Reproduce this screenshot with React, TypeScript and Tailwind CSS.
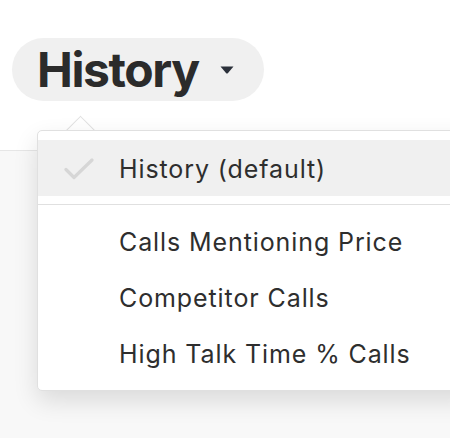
import React from 'react';

interface ViewOption {
  label: string;
  selected?: boolean;
}

const options: ViewOption[] = [
  { label: 'Calls Mentioning Price' },
  { label: 'Competitor Calls' },
  { label: 'High Talk Time % Calls' },
];

const CheckIcon = () => (
  <svg width="32" height="24" viewBox="0 0 32 24" fill="none">
    <path d="M3 11.5 L11 19.5 L29 2" stroke="#d6d6d6" strokeWidth="3.2" strokeLinecap="round" strokeLinejoin="round" />
  </svg>
);

const Caret = () => (
  <svg width="14" height="8" viewBox="0 0 14 8">
    <path d="M0.5 0.5 H13.5 L7.8 7.2 Q7 8 6.2 7.2 Z" fill="#2b303a" />
  </svg>
);

const MenuRow: React.FC<{ option: ViewOption }> = ({ option }) => (
  <div
    className={`flex h-[56px] items-center pl-[25px] pt-[3px] ${option.selected ? 'bg-[#f0f0f0]' : ''}`}
  >
    <div className="w-[56px] flex items-center">
      {option.selected && <CheckIcon />}
    </div>
    <span className="text-[25px] text-[#2e2e2e] tracking-[0.9px]">{option.label}</span>
  </div>
);

export default function App() {
  return (
    <div
      className="relative w-[450px] h-[438px] overflow-hidden bg-[#f8f8f8]"
      style={{ fontFamily: 'Inter, "Noto Sans", sans-serif' }}
    >
      {/* Header strip */}
      <div className="h-[151px] bg-white border-b border-[#e6e6e6] pt-[38px] pl-[12px]">
        <button className="flex h-[63px] items-center gap-[21px] rounded-full bg-[#f0f0f0] pl-[25px] pr-[30px]">
          <span className="text-[48px] font-bold text-[#2b2b2b] tracking-[-1.4px] leading-none">History</span>
          <Caret />
        </button>
      </div>

      {/* Saved views dropdown */}
      <div className="absolute left-[37px] top-[130px] w-[440px]">
        <div className="absolute left-[33px] top-[-10px] h-[21px] w-[21px] rotate-45 border-l border-t border-[#e0e0e0] bg-white" />
        <div className="relative rounded-[5px] border border-[#e0e0e0] bg-white py-[9px] shadow-[0_10px_24px_rgba(0,0,0,0.12)]">
          <MenuRow option={{ label: 'History (default)', selected: true }} />
          <div className="my-[8px] h-px bg-[#e0e0e0]" />
          {options.map((o) => (
            <MenuRow key={o.label} option={o} />
          ))}
        </div>
      </div>
    </div>
  );
}
